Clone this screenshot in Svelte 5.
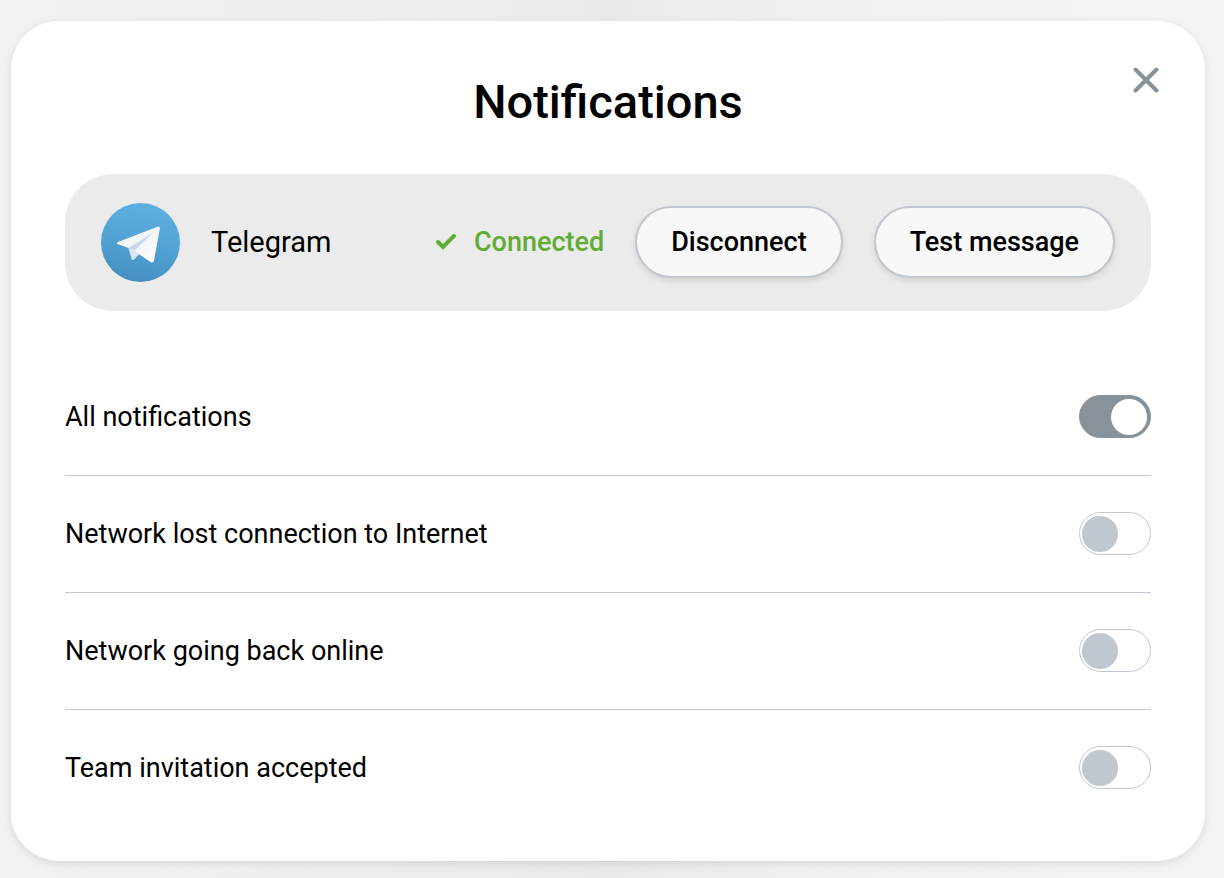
<script lang="ts">
let connected = $state(true);

let settings = $state([
  { id: "all", label: "All notifications", enabled: true },
  { id: "lost", label: "Network lost connection to Internet", enabled: false },
  { id: "online", label: "Network going back online", enabled: false },
  { id: "team", label: "Team invitation accepted", enabled: false },
]);
</script>

<main class="backdrop">
  <div class="modal" role="dialog" aria-labelledby="modal-title">
    <button class="close" aria-label="Close">
      <svg viewBox="0 0 28 28" width="28" height="28" aria-hidden="true">
        <path d="M3.500 2.500 24.500 23.500M24.500 2.500 3.500 23.500" />
      </svg>
    </button>

    <h1 id="modal-title">Notifications</h1>

    <section class="channel">
      <svg class="logo" viewBox="0 -1 80 80" aria-hidden="true">
        <defs>
          <linearGradient id="tg-blue" x1="0.6" y1="0" x2="0.4" y2="1">
            <stop offset="0" stop-color="#5fafe0" />
            <stop offset="0.4" stop-color="#55a6d8" />
            <stop offset="1" stop-color="#458fc0" />
          </linearGradient>
          <linearGradient id="tg-wing" x1="0" y1="0" x2="0.8" y2="1">
            <stop offset="0" stop-color="#e9eff8" />
            <stop offset="1" stop-color="#fff" />
          </linearGradient>
        </defs>
        <circle cx="39.5" cy="39.5" r="39.5" fill="url(#tg-blue)" />
        <path d="M27 44 53 29 34 47.500 32 56.500Q30.800 57.500 30.500 55.500Z" fill="#c9d7e8" />
        <path d="M34 47.500 38 51.500 33 56.500Q31 58 30.700 55.500L28.500 45.500Z" fill="#dbe5f1" />
        <path
          d="M16.500 41Q15 40 17 39L56.500 23.700Q59 23 57 26L52 29.800 27.500 45Z"
          fill="#f3f7fc"
        />
        <path
          d="M34 47 56.500 25Q59.300 22.800 58.800 26L53 57.500Q52 60.500 49.500 59L34 48.500Q33 47.800 34 47Z"
          fill="url(#tg-wing)"
        />
      </svg>
      <span class="name">Telegram</span>
      {#if connected}
        <span class="status">
          <svg viewBox="0 0 20 16" width="20" height="16" aria-hidden="true">
            <path d="M2 8 7 13 18 2" />
          </svg>
          Connected
        </span>
      {/if}
      <button class="action" onclick={() => (connected = !connected)}>
        {connected ? "Disconnect" : "Connect"}
      </button>
      <button class="action">Test message</button>
    </section>

    <ul class="settings">
      {#each settings as setting (setting.id)}
        <li>
          <label for={setting.id}>{setting.label}</label>
          <input
            id={setting.id}
            class="toggle"
            type="checkbox"
            role="switch"
            bind:checked={setting.enabled}
          />
        </li>
      {/each}
    </ul>
  </div>
</main>

<style>
:global(body) {
  background: #f1f2f4;
}

.backdrop {
  box-sizing: border-box;
  min-height: 100vh;
  padding: 21px 19px 17px 11px;
  background: linear-gradient(
    90deg,
    #f1f2f4,
    #eeeff0 30%,
    #e9eaec 50%,
    #f0f1f3 65%,
    #f3f4f5
  );
  font-family: Roboto, "Liberation Sans", sans-serif;
  color: #000;
}

.modal {
  position: relative;
  box-sizing: border-box;
  padding: 49px 54px 35px;
  border-radius: 48px;
  background: #fff;
  box-shadow: 0 3px 10px rgba(0, 0, 0, 0.1);
}

.close {
  position: absolute;
  top: 40px;
  right: 39px;
  display: grid;
  place-items: center;
  width: 40px;
  height: 40px;
  padding: 0;
  border: none;
  background: none;
  cursor: pointer;
}
.close path {
  fill: none;
  stroke: #87929a;
  stroke-width: 4;
  stroke-linecap: round;
}

h1 {
  margin: 0 0 40px;
  font-size: 47px;
  font-weight: 500;
  line-height: 64px;
  text-align: center;
}

.channel {
  display: flex;
  align-items: center;
  padding: 28px 36px 29px;
  border-radius: 48px;
  background: #ebebeb;
}
.logo {
  flex: none;
  width: 80px;
  height: 80px;
}
.name {
  margin: 0 auto 0 30px;
  font-size: 29px;
}
.status {
  display: flex;
  align-items: center;
  gap: 18px;
  color: #61ac34;
  font-size: 27px;
  font-weight: 500;
}
.status path {
  fill: none;
  stroke: #61ac34;
  stroke-width: 4;
  stroke-linecap: round;
}
.action {
  height: 72px;
  margin-left: 31px;
  padding: 0 34px;
  border: 2px solid #c1c7cf;
  border-radius: 36px;
  background: #f8f8f8;
  box-shadow: 0 3px 6px rgba(0, 0, 0, 0.1);
  color: #000;
  font-family: inherit;
  font-size: 27px;
  font-weight: 500;
  white-space: nowrap;
  cursor: pointer;
}

.settings {
  list-style: none;
  margin: 48px 0 0;
  padding: 0;
}
.settings li {
  display: flex;
  align-items: center;
  justify-content: space-between;
  padding: 36px 0 37px;
}
.settings li + li {
  border-top: 1px solid #c3c7cf;
}
.settings label {
  font-size: 27px;
}

.toggle {
  appearance: none;
  box-sizing: border-box;
  display: flex;
  align-items: center;
  width: 72px;
  height: 43px;
  margin: 0;
  padding: 0 2px;
  border: 1px solid #c1c7cf;
  border-radius: 22px;
  background: #fff;
  cursor: pointer;
}
.toggle::before {
  content: "";
  width: 36px;
  height: 36px;
  border-radius: 50%;
  background: #c1c7cf;
}
.toggle:checked {
  justify-content: flex-end;
  padding: 0 3px;
  border-color: #87929a;
  background: #87929a;
}
.toggle:checked::before {
  background: #fff;
}
</style>
